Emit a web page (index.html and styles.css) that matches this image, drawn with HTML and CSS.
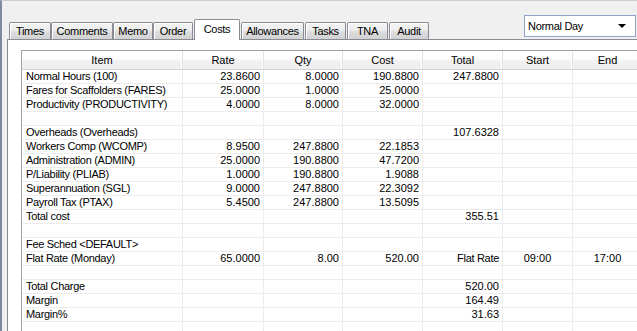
FILE: index.html
```html
<!DOCTYPE html>
<html lang="en">
<head>
  <meta charset="UTF-8">
  <title>Job Costs</title>
  <link rel="stylesheet" href="styles.css">
</head>
<body>
  <div class="window">
    <div class="top-bar">
      <div class="tabs">
        <div class="tab tab-times">Times</div>
        <div class="tab tab-comments">Comments</div>
        <div class="tab tab-memo">Memo</div>
        <div class="tab tab-order">Order</div>
        <div class="tab tab-costs active">Costs</div>
        <div class="tab tab-allowances">Allowances</div>
        <div class="tab tab-tasks">Tasks</div>
        <div class="tab tab-tna">TNA</div>
        <div class="tab tab-audit">Audit</div>
      </div>
      <div class="day-select">
        <span>Normal Day</span>
        <span class="arrow"></span>
      </div>
    </div>

    <div class="panel">
      <div class="grid">
        <div class="row head">
          <div>Item</div><div>Rate</div><div>Qty</div><div>Cost</div><div>Total</div><div>Start</div><div>End</div>
        </div>
        <div class="row">
          <div class="item">Normal Hours (100)</div><div>23.8600</div><div>8.0000</div><div>190.8800</div><div>247.8800</div><div></div><div></div>
        </div>
        <div class="row">
          <div class="item">Fares for Scaffolders (FARES)</div><div>25.0000</div><div>1.0000</div><div>25.0000</div><div></div><div></div><div></div>
        </div>
        <div class="row">
          <div class="item">Productivity (PRODUCTIVITY)</div><div>4.0000</div><div>8.0000</div><div>32.0000</div><div></div><div></div><div></div>
        </div>
        <div class="row">
          <div class="item"></div><div></div><div></div><div></div><div></div><div></div><div></div>
        </div>
        <div class="row">
          <div class="item">Overheads (Overheads)</div><div></div><div></div><div></div><div>107.6328</div><div></div><div></div>
        </div>
        <div class="row">
          <div class="item">Workers Comp (WCOMP)</div><div>8.9500</div><div>247.8800</div><div>22.1853</div><div></div><div></div><div></div>
        </div>
        <div class="row">
          <div class="item">Administration (ADMIN)</div><div>25.0000</div><div>190.8800</div><div>47.7200</div><div></div><div></div><div></div>
        </div>
        <div class="row">
          <div class="item">P/Liability (PLIAB)</div><div>1.0000</div><div>190.8800</div><div>1.9088</div><div></div><div></div><div></div>
        </div>
        <div class="row">
          <div class="item">Superannuation (SGL)</div><div>9.0000</div><div>247.8800</div><div>22.3092</div><div></div><div></div><div></div>
        </div>
        <div class="row">
          <div class="item">Payroll Tax (PTAX)</div><div>5.4500</div><div>247.8800</div><div>13.5095</div><div></div><div></div><div></div>
        </div>
        <div class="row">
          <div class="item">Total cost</div><div></div><div></div><div></div><div>355.51</div><div></div><div></div>
        </div>
        <div class="row">
          <div class="item"></div><div></div><div></div><div></div><div></div><div></div><div></div>
        </div>
        <div class="row">
          <div class="item">Fee Sched &lt;DEFAULT&gt;</div><div></div><div></div><div></div><div></div><div></div><div></div>
        </div>
        <div class="row">
          <div class="item">Flat Rate (Monday)</div><div>65.0000</div><div>8.00</div><div>520.00</div><div class="label">Flat Rate</div><div class="time">09:00</div><div class="time">17:00</div>
        </div>
        <div class="row">
          <div class="item"></div><div></div><div></div><div></div><div></div><div></div><div></div>
        </div>
        <div class="row">
          <div class="item">Total Charge</div><div></div><div></div><div></div><div>520.00</div><div></div><div></div>
        </div>
        <div class="row">
          <div class="item">Margin</div><div></div><div></div><div></div><div>164.49</div><div></div><div></div>
        </div>
        <div class="row">
          <div class="item">Margin%</div><div></div><div></div><div></div><div>31.63</div><div></div><div></div>
        </div>
        <div class="row">
          <div class="item"></div><div></div><div></div><div></div><div></div><div></div><div></div>
        </div>
      </div>
    </div>
  </div>
</body>
</html>
```

FILE: styles.css
```css
/* Basic Reset */
* {
  margin: 0;
  padding: 0;
  box-sizing: border-box;
}

html, body {
  overflow: hidden;
  height: 100%;
}

body {
  font-family: 'Liberation Sans', Arial, sans-serif;
  font-size: 11px;
  color: #000;
  background-color: #f0f0f0;
}

.window {
  display: flex;
  flex-direction: column;
  height: 100%;
  border-top: 1px solid #c9ced6;
  border-left: 2px solid #7d8aa0;
}

/* Tabs and day selector */
.top-bar {
  display: flex;
  align-items: flex-start;
  height: 38px;
  flex-shrink: 0;
}

.tabs {
  display: flex;
  align-items: flex-end;
  height: 38px;
  padding-left: 7px;
}

.tab {
  height: 17px;
  line-height: 16px;
  text-align: center;
  letter-spacing: -0.3px;
  border: 1px solid #898c95;
  border-bottom: none;
  border-radius: 2px 2px 0 0;
  background: linear-gradient(to bottom, #f4f4f4 0%, #ececec 45%, #dddddd 55%, #d2d2d2 100%);
  box-shadow: inset 1px 1px 0 #fff;
}

.tab-times { width: 42px; }
.tab-comments { width: 62px; }
.tab-memo { width: 40px; }
.tab-order { width: 40px; }
.tab-allowances { width: 63px; margin-left: 1px; }
.tab-tasks { width: 41px; margin-left: 1px; }
.tab-tna { width: 41px; margin-left: 1px; }
.tab-audit { width: 40px; margin-left: 1px; }

.tab.active {
  width: 46px;
  height: 21px;
  margin: 0 0 -1px 1px;
  line-height: 18px;
  background: #fff;
  box-shadow: none;
  position: relative;
  z-index: 1;
}

.day-select {
  display: flex;
  align-items: center;
  justify-content: space-between;
  width: 112px;
  height: 22px;
  margin: 14px 1px 0 auto;
  padding: 0 9px 0 3px;
  background-color: #fff;
  border: 1px solid #8ea6c6;
  letter-spacing: -0.3px;
}

.arrow {
  width: 0;
  height: 0;
  border-left: 4px solid transparent;
  border-right: 4px solid transparent;
  border-top: 4px solid #000;
}

/* Tab page */
.panel {
  flex: 1;
  min-height: 0;
  overflow: hidden;
  margin-left: 5px;
  padding: 10px 0 0 13px;
  background-color: #fff;
  border-top: 1px solid #898c95;
  border-left: 1px solid #898c95;
}

.grid {
  width: 622px;
  border-top: 1px solid #a0a0a0;
  border-left: 1px solid #a0a0a0;
}

.row {
  display: grid;
  grid-template-columns: 161px 81px 79px 80px 80px 70px 70px;
  height: 14px;
  line-height: 13px;
  border-bottom: 1px solid #ececec;
}

.row > div {
  border-right: 1px solid #ececec;
  padding-right: 3px;
  text-align: right;
  white-space: nowrap;
}

.row .item {
  text-align: left;
  padding-left: 4px;
  letter-spacing: -0.3px;
}

.row .label {
  letter-spacing: -0.3px;
}

.row .time {
  text-align: center;
  padding-right: 0;
}

.row.head {
  height: 19px;
  line-height: 18px;
  background: linear-gradient(to bottom, #ffffff 0%, #fbfbfb 45%, #f1f1f1 55%, #eeeeee 100%);
  border-bottom: 1px solid #d5d5d5;
}

.row.head > div {
  text-align: center;
  padding-right: 0;
  border-right: 1px solid #e2e2e2;
  box-shadow: inset -1px 0 0 #fff;
}
```
